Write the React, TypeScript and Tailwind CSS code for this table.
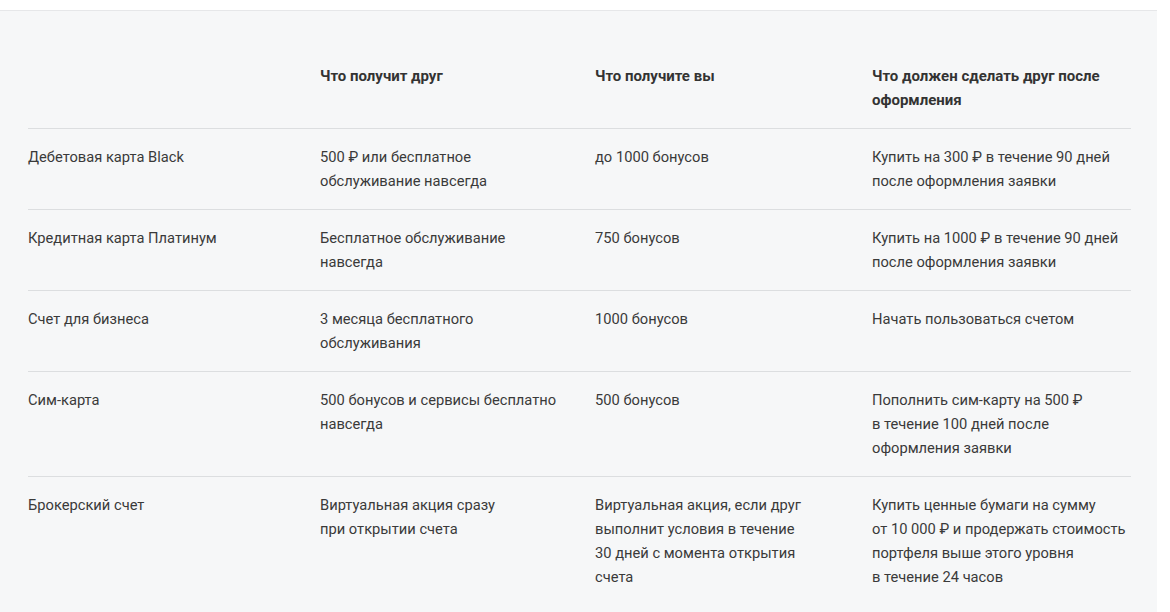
import React from "react";

const rows: [string, string, string, string][] = [
  ["Дебетовая карта Black", "500 ₽ или бесплатное\nобслуживание навсегда", "до 1000 бонусов", "Купить на 300 ₽ в течение 90 дней\nпосле оформления заявки"],
  ["Кредитная карта Платинум", "Бесплатное обслуживание\nнавсегда", "750 бонусов", "Купить на 1000 ₽ в течение 90 дней\nпосле оформления заявки"],
  ["Счет для бизнеса", "3 месяца бесплатного\nобслуживания", "1000 бонусов", "Начать пользоваться счетом"],
  ["Сим-карта", "500 бонусов и сервисы бесплатно\nнавсегда", "500 бонусов", "Пополнить сим-карту на 500 ₽\nв течение 100 дней после\nоформления заявки"],
  ["Брокерский счет", "Виртуальная акция сразу\nпри открытии счета", "Виртуальная акция, если друг\nвыполнит условия в течение\n30 дней с момента открытия\nсчета", "Купить ценные бумаги на сумму\nот 10 000 ₽ и продержать стоимость\nпортфеля выше этого уровня\nв течение 24 часов"],
];

function Cell({ text, bold }: { text: string; bold?: boolean }) {
  return (
    <div className={`py-4 whitespace-pre ${bold ? "font-bold text-[15px] text-[#333333]" : "text-[#3a3a3a]"}`}>
      {text}
    </div>
  );
}

export default function App() {
  return (
    <div className="w-[1170px] h-[612px] overflow-hidden bg-white" style={{ fontFamily: "Roboto, 'Noto Sans', sans-serif" }}>
      <div className="h-[10px] bg-white" />
      <div className="w-[1157px] h-[602px] bg-[#f6f7f8] border-t border-[#e6e7e9] pt-[37px] pl-[28px]">
        <div className="w-[1103px] text-[14.7px] leading-6">
          <div className="grid grid-cols-[292px_275px_277px_259px] border-b border-[#dcdee0]">
            <Cell text="" />
            <Cell text="Что получит друг" bold />
            <Cell text="Что получите вы" bold />
            <Cell text={"Что должен сделать друг после\nоформления"} bold />
          </div>
          {rows.map((r, i) => (
            <div
              key={i}
              className={`grid grid-cols-[292px_275px_277px_259px] ${i < rows.length - 1 ? "border-b border-[#dcdee0]" : ""}`}
            >
              {r.map((t, j) => (
                <Cell key={j} text={t} />
              ))}
            </div>
          ))}
        </div>
      </div>
    </div>
  );
}
